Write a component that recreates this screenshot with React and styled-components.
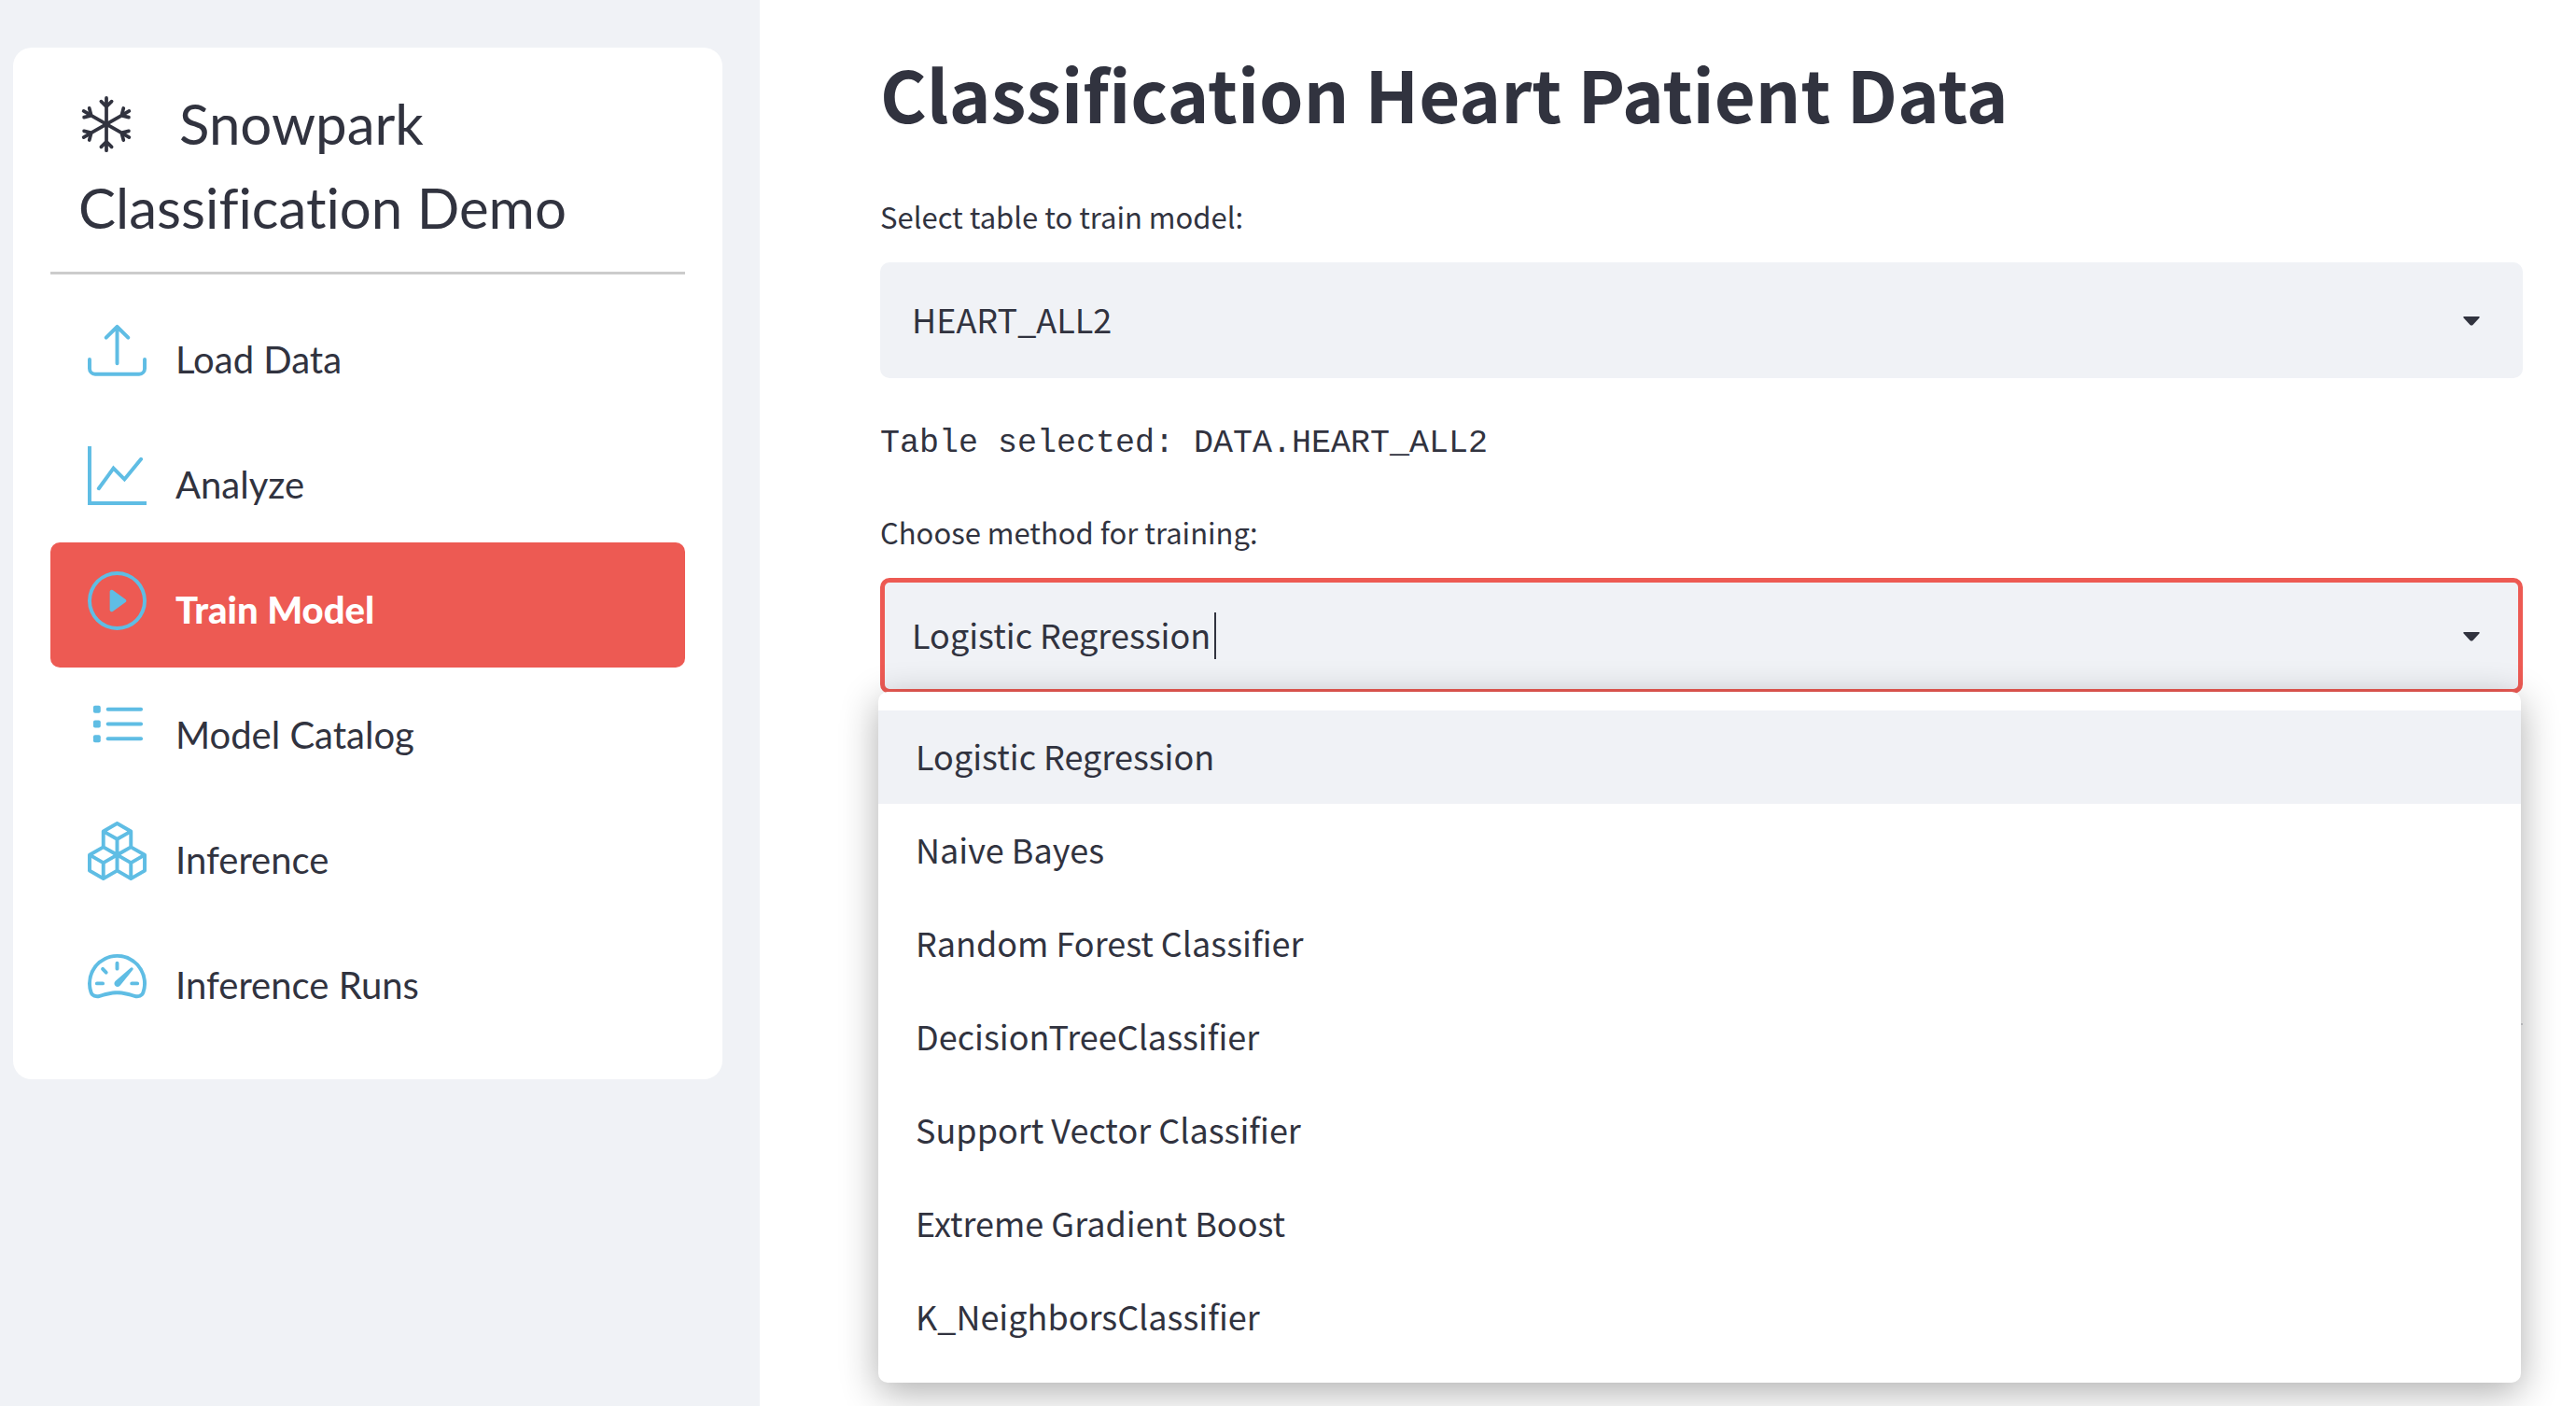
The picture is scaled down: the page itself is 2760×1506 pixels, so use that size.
import React, { useState } from "react";
import styled, { createGlobalStyle } from "styled-components";
import {
  BsBoxes,
  BsPlayCircle,
  BsSnow,
  BsSpeedometer2,
  BsUpload,
} from "react-icons/bs";

const ink = "#31333f";
const accent = "#ed5a53";
const surface = "#f0f2f6";
const iconBlue = "#5fbde4";
const sans = `"Noto Sans CJK SC", "Noto Sans", sans-serif`;
const mono = `"Liberation Mono", monospace`;

const GlobalStyle = createGlobalStyle`
  *, *::before, *::after { box-sizing: border-box; }
  body {
    margin: 0;
    background: #fff;
    color: ${ink};
    font-family: ${sans};
  }
`;

const Page = styled.div`
  display: flex;
  min-height: 100vh;
  overflow: hidden;
`;

const Sidebar = styled.aside`
  flex: 0 0 814px;
  padding: 51px 40px 51px 14px;
  background: ${surface};
`;

const MenuCard = styled.div`
  padding: 36px 40px 39px;
  border-radius: 20px;
  background: #fff;
  font-family: Lato, sans-serif;
  font-variant-ligatures: none;
`;

const MenuTitle = styled.h2`
  margin: 0;
  padding: 0 30px 24px;
  border-bottom: 3px solid #ccc;
  font-size: 60px;
  line-height: 90px;
  font-weight: 400;

  svg {
    width: 60px;
    height: 60px;
    margin-right: 48px;
    vertical-align: -8px;
  }
`;

const NavList = styled.ul`
  display: flex;
  flex-direction: column;
  margin: 19px 0 0;
  padding: 0;
  list-style: none;
`;

const NavLink = styled.a`
  display: flex;
  align-items: flex-start;
  gap: 31px;
  height: 134px;
  padding: 31px 40px 0;
  border-radius: 10px;
  background: ${({ $active }) => ($active ? accent : "transparent")};
  color: ${({ $active }) => ($active ? "#fff" : ink)};
  font-size: 40px;
  line-height: 82px;
  font-weight: ${({ $active }) => ($active ? 900 : 400)};
  text-decoration: none;

  svg {
    flex: none;
    width: 63px;
    height: 63px;
    color: ${iconBlue};
  }
`;

const Main = styled.main`
  flex: 1;
  min-width: 0;
  padding: 45px 57px 0 129px;
`;

const Title = styled.h1`
  margin: 0 0 54px;
  font-size: 76px;
  line-height: 108px;
  font-weight: 700;
`;

const Field = styled.div`
  display: flex;
  flex-direction: column;
  gap: 24px;
  position: relative;
`;

const Label = styled.label`
  font-size: 31px;
  line-height: 50px;
`;

const Control = styled.div`
  display: grid;
  grid-template-columns: 1fr auto;
  align-items: center;
  height: 124px;
  border: 5px solid ${({ $focused }) => ($focused ? accent : surface)};
  border-radius: 10px;
  background: ${surface};
`;

const Select = styled.select`
  grid-area: 1 / 1 / 2 / 3;
  height: 100%;
  padding: 0 80px 4px 29px;
  border: 0;
  outline: 0;
  appearance: none;
  background: transparent;
  color: ${ink};
  font-family: ${sans};
  font-size: 36px;
`;

const Entry = styled.div`
  display: flex;
  align-items: center;
  padding-left: 29px;
`;

const ComboInput = styled.input`
  field-sizing: content;
  padding: 0 0 4px;
  border: 0;
  outline: 0;
  background: transparent;
  color: ${ink};
  font-family: ${sans};
  font-size: 36px;
`;

const TextCaret = styled.span`
  width: 2px;
  height: 50px;
  margin-left: 4px;
  background: ${ink};
`;

const Arrow = styled.svg`
  grid-area: 1 / 2 / 2 / 3;
  width: 18px;
  height: 10px;
  margin: 2px 41px 0 0;
  fill: ${ink};
  pointer-events: none;
`;

const SelectedTable = styled.p`
  margin: 45px 0;
  font-family: ${mono};
  font-size: 35px;
  line-height: 50px;
`;

const OptionList = styled.ul`
  position: absolute;
  top: calc(100% - 2px);
  left: -2px;
  right: 2px;
  margin: 0;
  padding: 20px 0;
  border-radius: 10px;
  background: #fff;
  box-shadow: 0 10px 40px rgba(0, 0, 0, 0.32);
  list-style: none;
`;

const Option = styled.li`
  padding: 0 40px 4px;
  background: ${({ $active }) => ($active ? surface : "transparent")};
  font-size: 36px;
  line-height: 96px;
`;

const Divider = styled.hr`
  height: 2px;
  margin: 353px 0 0;
  border: 0;
  background: #d5d6d9;
`;

function GraphIcon() {
  return (
    <svg viewBox="0 0 16 16" fill="none" stroke="currentColor" aria-hidden="true">
      <path d="M.5 0v15.5H16" />
      <path d="M3 11.5 7 6l3 3 4.5-5.5" strokeLinecap="round" />
    </svg>
  );
}

function ListIcon() {
  return (
    <svg viewBox="0 0 16 16" fill="currentColor" aria-hidden="true">
      {[2.5, 6.5, 10.5].map((y) => (
        <g key={y}>
          <rect x="1.5" y={y} width="2" height="2" rx=".5" />
          <rect x="5" y={y + 0.5} width="10" height="1" rx=".5" />
        </g>
      ))}
    </svg>
  );
}

function DownArrow() {
  return (
    <Arrow viewBox="0 0 18 10" aria-hidden="true">
      <path d="M1 0h16q1.500.6.4 1.600L10.500 9q-1.500 1.200-3 0L.6 1.600Q-.5.6 1 0z" />
    </Arrow>
  );
}

const navItems = [
  { name: "Load Data", Icon: BsUpload },
  { name: "Analyze", Icon: GraphIcon },
  { name: "Train Model", Icon: BsPlayCircle },
  { name: "Model Catalog", Icon: ListIcon },
  { name: "Inference", Icon: BsBoxes },
  { name: "Inference Runs", Icon: BsSpeedometer2 },
];

const methods = [
  "Logistic Regression",
  "Naive Bayes",
  "Random Forest Classifier",
  "DecisionTreeClassifier",
  "Support Vector Classifier",
  "Extreme Gradient Boost",
  "K_NeighborsClassifier",
];

export default function App() {
  const [page, setPage] = useState("Train Model");
  const [method, setMethod] = useState(methods[0]);

  return (
    <>
      <GlobalStyle />
      <Page>
        <Sidebar>
          <MenuCard>
            <MenuTitle>
              <BsSnow aria-hidden="true" />
              Snowpark Classification Demo
            </MenuTitle>
            <nav>
              <NavList>
                {navItems.map(({ name, Icon }) => (
                  <li key={name}>
                    <NavLink
                      href="#"
                      $active={name === page}
                      aria-current={name === page ? "page" : undefined}
                      onClick={() => setPage(name)}
                    >
                      <Icon />
                      {name}
                    </NavLink>
                  </li>
                ))}
              </NavList>
            </nav>
          </MenuCard>
        </Sidebar>
        <Main>
          <Title>Classification Heart Patient Data</Title>
          <Field>
            <Label htmlFor="table">Select table to train model:</Label>
            <Control>
              <Select id="table" defaultValue="HEART_ALL2">
                <option>HEART_ALL2</option>
              </Select>
              <DownArrow />
            </Control>
          </Field>
          <SelectedTable>Table selected: DATA.HEART_ALL2</SelectedTable>
          <Field>
            <Label htmlFor="method">Choose method for training:</Label>
            <Control $focused>
              <Entry>
                <ComboInput
                  id="method"
                  role="combobox"
                  aria-expanded="true"
                  aria-controls="method-options"
                  value={method}
                  onChange={(event) => setMethod(event.target.value)}
                />
                <TextCaret />
              </Entry>
              <DownArrow />
            </Control>
            <OptionList id="method-options" role="listbox">
              {methods.map((name) => (
                <Option
                  key={name}
                  role="option"
                  aria-selected={name === method}
                  $active={name === method}
                  onClick={() => setMethod(name)}
                >
                  {name}
                </Option>
              ))}
            </OptionList>
          </Field>
          <Divider />
        </Main>
      </Page>
    </>
  );
}
